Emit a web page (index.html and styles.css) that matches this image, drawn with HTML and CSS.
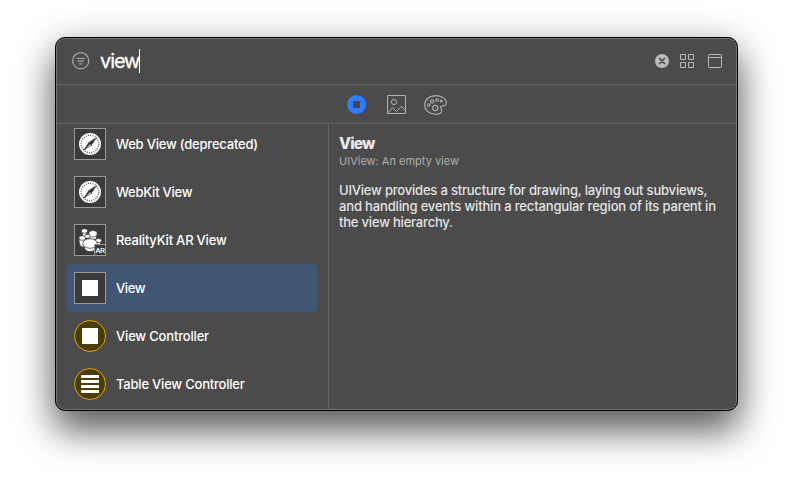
FILE: index.html
```html
<!DOCTYPE html>
<html lang="en">
<head>
<meta charset="utf-8">
<title>Library</title>
<link rel="stylesheet" href="styles.css">
</head>
<body>
<svg class="defs" width="0" height="0" aria-hidden="true">
  <symbol id="compass" viewBox="0 0 22 22">
    <circle cx="11" cy="11" r="11" fill="#fff"/>
    <circle cx="11" cy="11" r="8.8" fill="none" stroke="#3a3a3c" stroke-width="1.4" stroke-dasharray=".8 1.504"/>
    <path d="M18.2 3.8 12.6 12.6 3.8 18.2 9.4 9.4Z" fill="#3a3a3c"/>
    <path d="M11.2 11.2 12 12 6.2 15.9Z" fill="#fff"/>
  </symbol>
</svg>
<main class="window">
  <header class="search">
    <svg class="filter" width="18" height="18" viewBox="0 0 18 18" fill="none" stroke="#a9a9a9" stroke-width="1.2" stroke-linecap="round"><circle cx="8.7" cy="8.7" r="8.1"/><path d="M5 6.5h7.5M6.2 9.2h5.2M7.5 11.9h2.5"/></svg>
    <span class="query">view</span><span class="caret"></span>
    <svg class="clear" width="14" height="14" viewBox="0 0 14 14"><circle cx="7" cy="7" r="7" fill="#bdbdbd"/><path d="m4.4 4.4 5.2 5.2m0-5.2-5.2 5.2" stroke="#4b4b4b" stroke-width="1.5" stroke-linecap="round"/></svg>
    <svg class="grid" width="14" height="14" viewBox="0 0 14 14" fill="none" stroke="#b9b9b9"><path d="M.5.5h5v5h-5zM8.5.5h5v5h-5zM.5 8.5h5v5h-5zM8.5 8.5h5v5h-5z"/></svg>
    <svg class="panel" width="14" height="14" viewBox="0 0 14 14" fill="none" stroke="#b9b9b9"><rect x=".5" y=".5" width="13" height="13" rx=".8"/><path d="M.5 3.5h13"/></svg>
  </header>
  <nav class="tabs">
    <svg width="19" height="19" viewBox="0 0 19 19"><circle cx="9.5" cy="9.5" r="9.5" fill="#2f7cff"/><rect x="6" y="6" width="7" height="7" rx="1" fill="#46484d"/></svg>
    <svg width="19" height="19" viewBox="0 0 19 19" fill="none" stroke="#b0b0b0"><path d="M.5.5h18v18H.5z"/><circle cx="7" cy="7" r="2.6"/><path d="m1 17.8 4.7-5.2 3.8 4 4.800-5.400 4 4.500"/></svg>
    <svg class="palette" width="23" height="20" viewBox="0 0 23 20" fill="none" stroke="#b0b0b0" stroke-width="1.1"><path d="M11.500.6C5.400.6.7 4.600.7 10s4.700 9.300 10.800 9.300c3.800 0 6.300-1.500 6.300-3.600 0-1.500-1.200-2.100-1.200-3.400 0-1.100.9-1.500 2.400-1.400 2 .1 3.400-.9 3.400-3.300C22.400 3.600 17.700.6 11.500.6Z"/><circle cx="11.300" cy="13" r="2.600"/><circle cx="4.800" cy="10" r="1.200"/><circle cx="8.100" cy="6.500" r="1.600"/><circle cx="13" cy="5" r="1.300"/><circle cx="17.200" cy="6" r="1"/></svg>
  </nav>
  <div class="body">
    <ul class="list">
      <li><span class="icon"><svg width="22" height="22"><use href="#compass"/></svg></span><span class="t1">Web View (deprecated)</span></li>
      <li><span class="icon"><svg width="22" height="22"><use href="#compass"/></svg></span><span class="t2">WebKit View</span></li>
      <li><span class="icon"><svg width="30" height="30" viewBox="0 0 30 30"><g fill="#fff" stroke="#3a3a3c" stroke-width=".8"><path d="M7.500 6v4c0 2 4 2 4 0V6zM14.500 8v5c0 2 7 2 7 0V8z"/><ellipse cx="9.500" cy="6" rx="3.200" ry="2.300"/><ellipse cx="18" cy="8.800" rx="4.200" ry="3.200"/><path d="M4 14c0 5 1 8 4 8s5-2 5-8z"/><ellipse cx="7.300" cy="13" rx="3.500" ry="2.300"/><path d="M21.500 16.500v4h4v-4z"/><ellipse cx="23.500" cy="15.500" rx="3.200" ry="2"/><ellipse cx="12.500" cy="11.300" rx="2.800" ry="2"/><path d="M9 20c0 4 2 6.500 6 6.500s6-2.500 6-6.500z"/><ellipse cx="15" cy="18.500" rx="7.200" ry="4.800"/></g></svg><b class="ar">AR</b></span><span class="t3">RealityKit AR View</span></li>
      <li class="selected"><span class="icon"><i class="square"></i></span><span class="t4">View</span></li>
      <li><span class="icon round"><i class="square"></i></span><span class="t5">View Controller</span></li>
      <li><span class="icon round"><svg width="18" height="18"><path d="M0 0h18v3H0zM0 5h18v3H0zM0 10h18v3H0zM0 15h18v3H0z" fill="#fff"/></svg></span><span class="t6">Table View Controller</span></li>
    </ul>
    <section class="detail">
      <h1>View</h1>
      <h2>UIView: An empty view</h2>
      <p><span class="p1">UIView provides a structure for drawing, laying out subviews,</span><br><span class="p2">and handling events within a rectangular region of its parent in</span><br><span class="p3">the view hierarchy.</span></p>
    </section>
  </div>
</main>
</body>
</html>
```
FILE: styles.css
```css
* { box-sizing: border-box; }
body {
  margin: 0;
  height: 484px;
  padding: 37px 0 0 55px;
  background: #fff;
  overflow: hidden;
  font-family: Inter, "Liberation Sans", sans-serif;
}
.defs { position: absolute; }
svg { display: block; flex: none; }
.window {
  width: 683px;
  height: 374px;
  display: flex;
  flex-direction: column;
  border: 1px solid #000;
  border-radius: 10px;
  background: #4b4b4b;
  box-shadow: inset 0 0 0 1px #747474, 0 20px 36px rgba(0, 0, 0, .57), 0 6px 42px rgba(0, 0, 0, .2);
  padding: 1px;
  color: #fff;
}
.search {
  height: 46px;
  display: flex;
  align-items: center;
  padding: 0 14px 2px 15px;
  border-bottom: 1px solid #666;
}
.query {
  margin-left: 10px;
  font-size: 20px;
  line-height: 24px;
  letter-spacing: -1.1px;
  -webkit-text-stroke: .3px #fff;
}
.caret { width: 1px; height: 24px; background: #fff; }
.clear { margin-left: auto; }
.grid { margin-left: 11px; }
.panel { margin-left: 14px; }
.tabs {
  height: 39px;
  display: flex;
  align-items: center;
  gap: 21px;
  padding-left: 290px;
  border-bottom: 1px solid #666;
}
.palette { margin: 1px 0 0 -3px; }
.body { flex: 1; min-height: 0; display: flex; }
.list {
  width: 272px;
  margin: 0;
  padding: 0 10px 0 9px;
  border-right: 1px solid #646464;
  list-style: none;
  overflow: hidden;
}
.list li {
  height: 48px;
  display: flex;
  align-items: center;
  gap: 10px;
  padding-left: 8px;
  border-radius: 5px;
  font-size: 13px;
  font-weight: 500;
  white-space: nowrap;
}
.list li:first-child { margin-top: -4px; }
.selected { background: #415575; }
.icon {
  position: relative;
  width: 32px;
  height: 32px;
  display: flex;
  align-items: center;
  justify-content: center;
  border: 1px solid #98989a;
  background: #3a3a3c;
}
.round { border-color: #e5a60a; border-radius: 50%; background: #4a3c05; }
.square { width: 16px; height: 16px; background: #fff; }
.ar {
  position: absolute;
  right: -1px;
  bottom: -1px;
  width: 12px;
  height: 12px;
  border: 1px solid #98989a;
  background: #3a3a3c;
  font: 500 8px/11px Roboto, sans-serif;
  letter-spacing: -.4px;
  text-align: center;
}
.t1, .t3, .t6 { letter-spacing: -.21px; }
.t2 { letter-spacing: -.26px; }
.t4 { letter-spacing: -.4px; }
.t5 { letter-spacing: -.18px; }
.detail { padding: 10px 0 0 10px; white-space: nowrap; }
h1 { margin: 0; font-size: 15.5px; line-height: 20px; font-weight: 800; letter-spacing: -.8px; color: #e9e9e9; }
h2 { margin: 0; font-size: 11px; line-height: 15px; font-weight: 400; color: #adadad; }
p { margin: 13px 0 0; font-size: 13px; line-height: 16px; font-weight: 500; color: #e4e4e4; }
.p1, .p3 { letter-spacing: -.2px; }
.p2 { letter-spacing: -.155px; }
```
